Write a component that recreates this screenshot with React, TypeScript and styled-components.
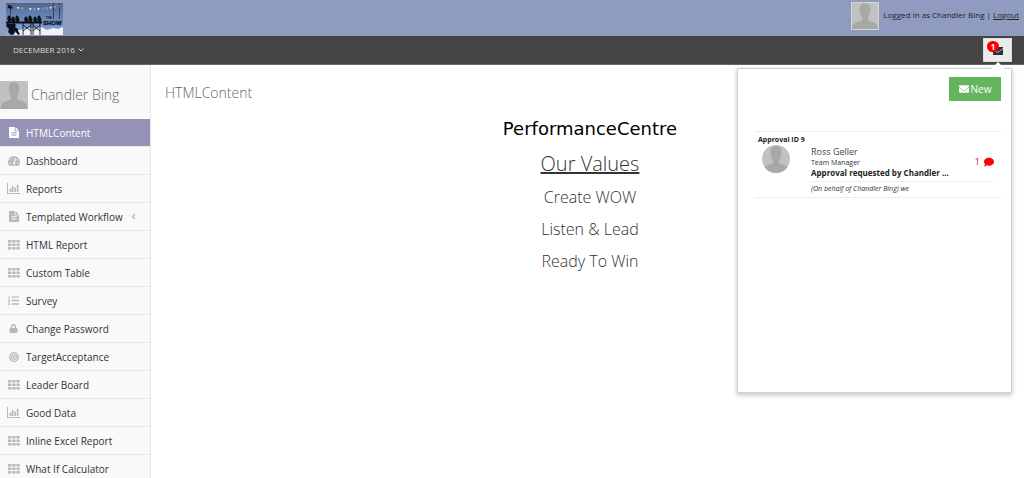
import React from 'react';
import styled, { createGlobalStyle } from 'styled-components';
import { FaAngleLeft, FaComment, FaEnvelope, FaListOl, FaLock, FaTachometerAlt } from 'react-icons/fa';

const GlobalStyle = createGlobalStyle`
  *, *::before, *::after { box-sizing: border-box; }
  body {
    margin: 0;
    background: #fff;
    color: #333;
    font-family: "Open Sans", "Noto Sans", sans-serif;
    font-size: 11px;
  }
  h1, h2, p, ul { margin: 0; padding: 0; font-weight: 400; }
  button { font-family: inherit; cursor: pointer; }
`;

const Page = styled.div`
  display: flex;
  flex-direction: column;
  height: 100vh;
  overflow: hidden;
`;

const Banner = styled.header`
  display: flex;
  flex: none;
  align-items: flex-start;
  justify-content: space-between;
  height: 36px;
  padding: 2px 5px 0 6px;
  background: #8f9cc0;
`;

const Logo = styled.svg`
  display: block;
  margin-top: 1px;
`;

const Account = styled.div`
  display: flex;
  gap: 5px;
  font-size: 8px;
  line-height: 26px;
  color: #222;
`;

const LogoutLink = styled.a`
  color: inherit;
  text-decoration: underline;
`;

const Toolbar = styled.nav`
  display: flex;
  flex: none;
  align-items: center;
  justify-content: space-between;
  height: 29px;
  padding: 0 12px 0 13px;
  background: #444;
  border-bottom: 1px solid #666;
`;

const PeriodButton = styled.button`
  display: flex;
  align-items: center;
  gap: 3px;
  padding: 0;
  border: 0;
  background: none;
  color: #ddd;
  font-size: 8px;
  line-height: 16px;
`;

const Inbox = styled.div`
  position: relative;
`;

const InboxButton = styled.button`
  display: flex;
  align-items: center;
  justify-content: center;
  width: 29px;
  height: 24px;
  padding: 0;
  border: 1px solid #ddd;
  background: #ebebe9;
  color: #263238;
`;

const Badge = styled.span`
  position: absolute;
  top: 3px;
  left: 4px;
  width: 12px;
  height: 11px;
  border-radius: 6px;
  background: #f40000;
  color: #fff;
  font-size: 8px;
  font-weight: 700;
  line-height: 11px;
  text-align: center;
`;

const Popover = styled.section`
  position: absolute;
  z-index: 2;
  top: 30px;
  right: 0;
  width: 275px;
  height: 325px;
  padding: 8px 10px 0 17px;
  border: 1px solid #d2d2d2;
  background: #fff;
  box-shadow: 0 2px 5px rgba(0, 0, 0, 0.25);

  &::before {
    content: "";
    position: absolute;
    top: -7px;
    right: 6px;
    border: 7px solid transparent;
    border-top: 0;
    border-bottom-color: #fff;
  }
`;

const NewButton = styled.button`
  display: flex;
  align-items: center;
  justify-content: center;
  gap: 2px;
  width: 52px;
  height: 24px;
  margin: 0 0 30px auto;
  padding: 0;
  border: 1px solid #5cb85c;
  background: #65b560;
  color: #fff;
  font-size: 10px;
`;

const Message = styled.article`
  border: 1px solid #eee;
  border-width: 1px 0;
  color: #333;
`;

const MessageId = styled.p`
  padding: 3px 0 0 3px;
  font-size: 7px;
  font-weight: 700;
  line-height: 10px;
  color: #222;
`;

const MessageRow = styled.div`
  display: grid;
  grid-template-columns: 28px 1fr;
  column-gap: 21px;
  padding: 0 7px;
`;

const MessageHead = styled.div`
  display: flex;
  align-items: flex-end;
  justify-content: space-between;
  height: 37px;
  padding-bottom: 3px;
  border-bottom: 1px solid #eee;
`;

const Sender = styled.p`
  font-size: 9px;
  line-height: 12px;
  color: #444;
`;

const Role = styled.p`
  font-size: 7px;
  line-height: 10px;
`;

const Subject = styled.p`
  font-size: 8px;
  font-weight: 700;
  line-height: 10px;
  white-space: nowrap;
  color: #222;
`;

const Replies = styled.span`
  display: flex;
  align-self: center;
  align-items: center;
  gap: 4px;
  color: #f00;
  font-size: 9px;
  line-height: 12px;
`;

const Excerpt = styled.p`
  grid-column: 2;
  padding-bottom: 1px;
  font-size: 7px;
  font-style: italic;
  line-height: 14px;
`;

const Body = styled.div`
  display: flex;
  flex: 1;
  min-height: 0;
`;

const Sidebar = styled.aside`
  flex: none;
  width: 151px;
  overflow: hidden;
  border-right: 1px solid #e7e7e7;
  background: #f9f9f9;
`;

const Profile = styled.div`
  display: flex;
  align-items: center;
  gap: 3px;
  height: 54px;
  padding: 6px 0 0;
  color: #666;
  font-size: 14px;
  font-weight: 300;
  line-height: 20px;
`;

const Menu = styled.ul`
  list-style: none;
`;

const MenuLink = styled.a<{ $active?: boolean }>`
  display: grid;
  grid-template-columns: 13px 1fr auto;
  align-items: center;
  column-gap: 6px;
  height: 28px;
  padding: 0 12px 0 7px;
  border-bottom: 1px solid #e7e7e7;
  background: ${({ $active }) => ($active ? '#9492b5' : 'transparent')};
  color: ${({ $active }) => ($active ? '#fff' : '#333')};
  font-size: 10px;
  line-height: 16px;
  text-decoration: none;
  white-space: nowrap;

  svg {
    justify-self: center;
    color: ${({ $active }) => ($active ? '#fff' : '#b8b8b8')};
  }
`;

const Main = styled.main`
  flex: 1;
  padding: 18px 14px;
`;

const PageTitle = styled.h1`
  font-size: 14px;
  font-weight: 300;
  line-height: 20px;
  color: #666;
`;

const Values = styled.section`
  padding: 14px 0 0 5px;
  text-align: center;
  color: #333;
`;

const Company = styled.p`
  font-family: "DejaVu Sans", Verdana, sans-serif;
  font-size: 18px;
  line-height: 24px;
  color: #000;
`;

const ValuesTitle = styled.h2`
  margin: 11px 0 5px;
  font-size: 20px;
  font-weight: 300;
  line-height: 24px;
  text-decoration: underline;
`;

const Value = styled.p`
  font-size: 16px;
  font-weight: 300;
  line-height: 32px;
`;

const AvatarSvg = styled.svg<{ $round?: boolean }>`
  display: block;
  flex: none;
  border-radius: ${({ $round }) => ($round ? '50%' : '0')};
`;

function Avatar({ framed, round }: { framed?: boolean; round?: boolean }) {
  return (
    <AvatarSvg $round={round} width="28" height="28" viewBox="0 0 28 28" aria-hidden="true">
      <rect width="28" height="28" fill="#c1c1c1" />
      <path
        d="M14 1.200c-3.500 0-5.300 2.300-5.300 5.900 0 .8.100 1.500.3 2.100-.7.300-.2 2.100.5 2.600.3 1.600.9 2.700 1.500 3.400v2.700c-.6 1.300-3.500 1.500-6 2.500C1.800 21.700.6 24 .6 28h26.800c0-4-1.200-6.300-4.400-7.600-2.500-1-5.400-1.200-6-2.500v-2.700c.6-.7 1.200-1.800 1.500-3.400.7-.5 1.200-2.300.5-2.600.2-.6.3-1.300.3-2.100 0-3.600-1.800-5.900-5.300-5.900z"
        fill="#a8a8a8"
      />
      {framed && <rect x=".5" y=".5" width="27" height="27" fill="none" stroke="#d5d5d5" />}
    </AvatarSvg>
  );
}

const bunting = ['#c9523c', '#e8e4d0', '#d99a3a', '#c9523c', '#e8e4d0', '#68b5cf', '#e8e4d0', '#d9783a', '#68b5cf', '#e8e4d0', '#d99a3a', '#c9523c'];

function ShowLogo() {
  return (
    <Logo width="57" height="32" viewBox="0 0 57 32" role="img" aria-label="The Show">
      <defs>
        <linearGradient id="sky" x1="0" y1="0" x2="0" y2="1">
          <stop offset="0" stopColor="#4a6799" />
          <stop offset="1" stopColor="#8fabdc" />
        </linearGradient>
      </defs>
      <rect width="57" height="32" fill="url(#sky)" />
      <path d="M8 32l3-4 6-2 6-1 7 1 5-2 6 3 6-2 5 1 5-2v8z" fill="#f1f2f6" />
      <path d="M4.500 2v17M47.500 0v16M53.500 0v16" stroke="#27324c" strokeWidth=".8" />
      <path d="M2 2l5 1-1 3-4-1z" fill="#111622" />
      <path d="M5 3Q28 12 54 2" fill="none" stroke="#7581a0" strokeWidth=".5" />
      {bunting.map((color, i) => {
        const t = (i + 0.7) / 12;
        const x = 5 + 49 * t;
        const y = 3 * (1 - t) * (1 - t) + 15 * t * (1 - t) + 2 * t * t;
        return <path key={i} d="M-1.200 -1h2.600l-1.200 2.800z" fill={color} transform={`translate(${x} ${y + 1})`} />;
      })}
      <g fill="#0d111b">
        <path d="M0 18.500h36v2H0z" />
        {[2, 6, 10, 19, 23, 28, 32].map((x, i) => (
          <g key={x} transform={`translate(${x} ${13 + (i % 2)})`}>
            <circle cx="1" cy="1" r="1.500" />
            <path d="M-1 2l3-.5 1.500 1L3 6H0l-.3-2z" />
          </g>
        ))}
        <path d="M1 20l4 1 3-1 2 2-1 2 3 2v2l2 3-2 1-3-4-1 3-3 1-3-3 1-3-3-3z" />
      </g>
      <path d="M17 20v12M25 20v12M27 20v12M34 20v12M17 22l8 6M25 22l-8 6M27 22l7 6M34 22l-7 6" stroke="#151b29" strokeWidth=".9" />
      <text x="40" y="16" fontFamily="Liberation Sans, sans-serif" fontSize="3" fontWeight="700" fill="#0d111b">THE</text>
      <text x="37" y="22" fontFamily="Liberation Sans, sans-serif" fontSize="6" fontWeight="700" fill="#0d111b" stroke="#0d111b" strokeWidth=".3">SHOW</text>
    </Logo>
  );
}

function BarsIcon() {
  return (
    <svg width="13" height="11" viewBox="0 0 13 11" fill="currentColor" aria-hidden="true">
      <path d="M0 0h1v10h12v1H0zM2.500 5.500h2V9h-2zM5 3h1.500v6H5zM7.500 4.500h1.500V9H7.500zM9.800 2h1.700v7H9.800z" />
    </svg>
  );
}

function GridIcon() {
  return (
    <svg width="12" height="10" viewBox="0 0 12 10" fill="currentColor" aria-hidden="true">
      {[0, 3.5, 7].map((y) => [0, 4.2, 8.4].map((x) => <rect key={`${x}-${y}`} x={x} y={y} width="3.400" height="2.600" rx=".6" />))}
    </svg>
  );
}

function FileIcon() {
  return (
    <svg width="10" height="11" viewBox="0 0 10 11" fill="currentColor" aria-hidden="true">
      <path
        fillRule="evenodd"
        d="M.7 0h5v3.600c0 .4.300.7.7.7H10v6c0 .4-.3.700-.7.700H.7c-.4 0-.7-.3-.7-.7V.7C0 .3.300 0 .7 0zM2.500 5v.7h5V5zM2.500 6.700v.7h5v-.7zM2.500 8.400v.7h5v-.7zM6.500 0L10 3.500H6.500z"
      />
    </svg>
  );
}

function TargetIcon() {
  return (
    <svg width="10" height="10" viewBox="0 0 10 10" fill="none" stroke="currentColor" aria-hidden="true">
      <circle cx="5" cy="5" r="4.300" strokeWidth="1.300" />
      <circle cx="5" cy="5" r="2.500" strokeWidth="1.100" />
      <circle cx="5" cy="5" r="1.200" fill="currentColor" stroke="none" />
    </svg>
  );
}

function ChevronDown() {
  return (
    <svg width="6" height="4" viewBox="0 0 6 4" fill="none" stroke="currentColor" aria-hidden="true">
      <path d="M.5 .5L3 3L5.500 .5" />
    </svg>
  );
}

function InboxIcon() {
  return (
    <svg width="12" height="11" viewBox="0 0 12 11" aria-hidden="true">
      <path d="M1 2h10v8H1z" fill="#263238" />
      <path d="M1 4.500l4.500 3L11 3.500" fill="none" stroke="#cfd5d5" strokeWidth=".8" />
    </svg>
  );
}

const menuItems: { label: string; icon: React.ReactNode; nested?: boolean }[] = [
  { label: 'HTMLContent', icon: <FileIcon /> },
  { label: 'Dashboard', icon: <FaTachometerAlt size={12} /> },
  { label: 'Reports', icon: <BarsIcon /> },
  { label: 'Templated Workflow', icon: <FileIcon />, nested: true },
  { label: 'HTML Report', icon: <GridIcon /> },
  { label: 'Custom Table', icon: <GridIcon /> },
  { label: 'Survey', icon: <FaListOl size={11} /> },
  { label: 'Change Password', icon: <FaLock size={9} /> },
  { label: 'TargetAcceptance', icon: <TargetIcon /> },
  { label: 'Leader Board', icon: <GridIcon /> },
  { label: 'Good Data', icon: <BarsIcon /> },
  { label: 'Inline Excel Report', icon: <GridIcon /> },
  { label: 'What If Calculator', icon: <GridIcon /> },
];

export default function App() {
  return (
    <Page>
      <GlobalStyle />
      <Banner>
        <ShowLogo />
        <Account>
          <Avatar framed />
          <span>
            Logged in as Chandler Bing | <LogoutLink href="#logout">Logout</LogoutLink>
          </span>
        </Account>
      </Banner>
      <Toolbar>
        <PeriodButton type="button">
          DECEMBER 2016 <ChevronDown />
        </PeriodButton>
        <Inbox>
          <InboxButton type="button" aria-label="Messages">
            <InboxIcon />
            <Badge>1</Badge>
          </InboxButton>
          <Popover>
            <NewButton type="button">
              <FaEnvelope size={10} /> New
            </NewButton>
            <Message>
              <MessageId>Approval ID 9</MessageId>
              <MessageRow>
                <Avatar round />
                <MessageHead>
                  <div>
                    <Sender>Ross Geller</Sender>
                    <Role>Team Manager</Role>
                    <Subject>Approval requested by Chandler ...</Subject>
                  </div>
                  <Replies>
                    1 <FaComment size={10} />
                  </Replies>
                </MessageHead>
                <Excerpt>(On behalf of Chandler Bing) we</Excerpt>
              </MessageRow>
            </Message>
          </Popover>
        </Inbox>
      </Toolbar>
      <Body>
        <Sidebar>
          <Profile>
            <Avatar />
            <span>Chandler Bing</span>
          </Profile>
          <Menu>
            {menuItems.map((item, i) => (
              <li key={item.label}>
                <MenuLink href="#" $active={i === 0}>
                  {item.icon}
                  <span>{item.label}</span>
                  {item.nested && <FaAngleLeft size={9} />}
                </MenuLink>
              </li>
            ))}
          </Menu>
        </Sidebar>
        <Main>
          <PageTitle>HTMLContent</PageTitle>
          <Values>
            <Company>PerformanceCentre</Company>
            <ValuesTitle>Our Values</ValuesTitle>
            <Value>Create WOW</Value>
            <Value>Listen &amp; Lead</Value>
            <Value>Ready To Win</Value>
          </Values>
        </Main>
      </Body>
    </Page>
  );
}
